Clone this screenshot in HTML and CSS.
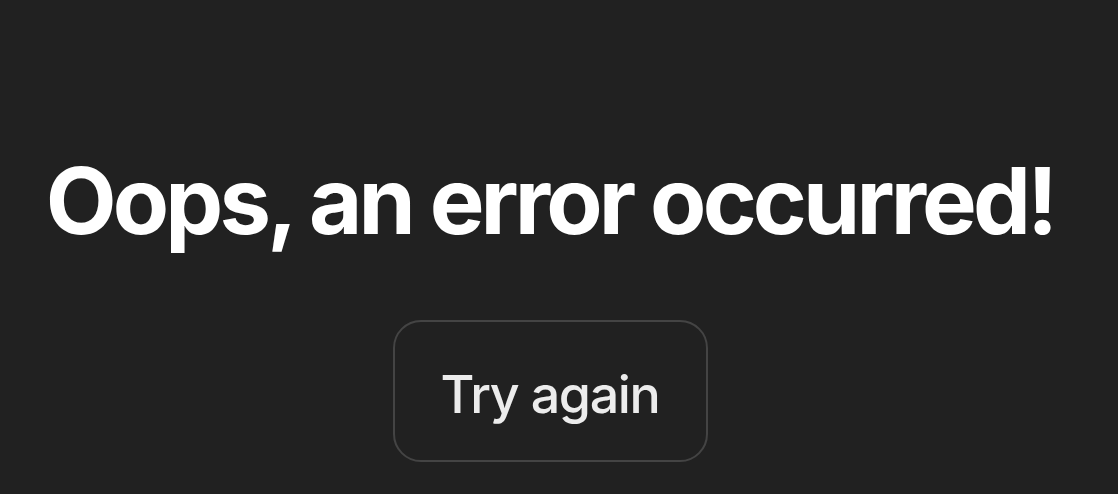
FILE: index.html
```html
<!DOCTYPE html>
<html>
<head>
<meta charset="utf-8">
<link rel="stylesheet" href="styles.css">
</head>
<body>
<main class="page">
  <h1 class="title">Oops, an error occurred!</h1>
  <button class="retry">Try again</button>
</main>
</body>
</html>
```
FILE: styles.css
```css
html, body {
  margin: 0;
  padding: 0;
  background: #212121;
  height: 100%;
}
.page {
  height: 494px;
  padding-right: 18px;
  display: flex;
  flex-direction: column;
  align-items: center;
  font-family: Inter, "Liberation Sans", sans-serif;
}
.title {
  margin: 146px 0 0 0;
  font-size: 92px;
  font-weight: 700;
  line-height: 110px;
  color: #ffffff;
  letter-spacing: -3.9px;
}
.retry {
  margin-top: 64px;
  width: 315px;
  height: 142px;
  padding: 6px 0 0 0;
  border: 2px solid #444444;
  border-radius: 28px;
  background: transparent;
  color: #ececec;
  font-family: Inter, "Liberation Sans", sans-serif;
  font-size: 52px;
  font-weight: 500;
  letter-spacing: -1.4px;
}
```
